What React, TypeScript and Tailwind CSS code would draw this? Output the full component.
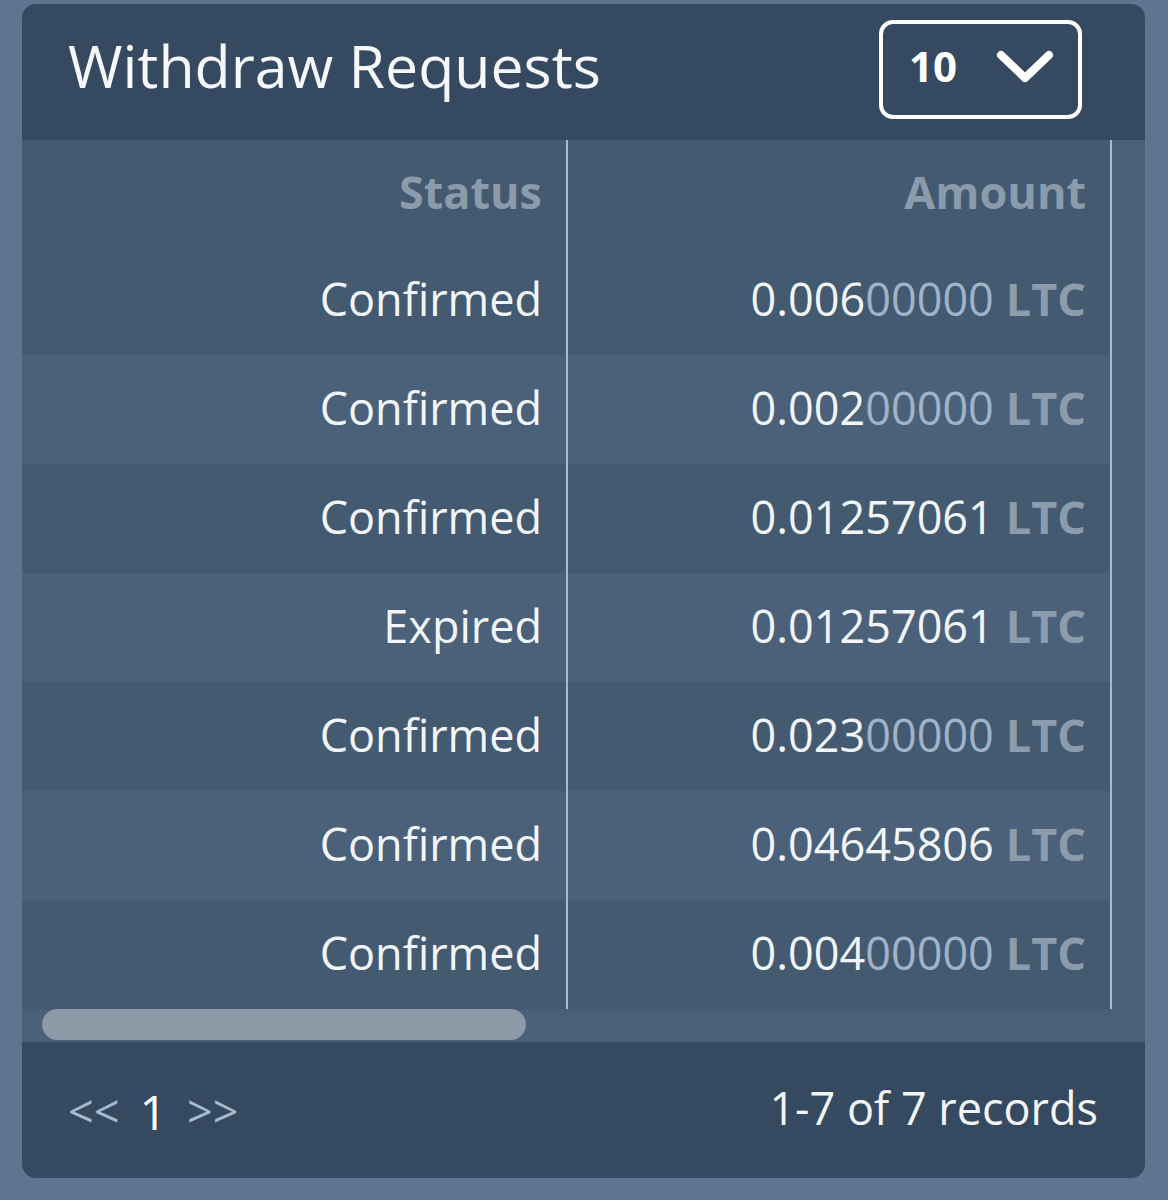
const rows = [
  { status: "Confirmed", amount: "0.00600000" },
  { status: "Confirmed", amount: "0.00200000" },
  { status: "Confirmed", amount: "0.01257061" },
  { status: "Expired", amount: "0.01257061" },
  { status: "Confirmed", amount: "0.02300000" },
  { status: "Confirmed", amount: "0.04645806" },
  { status: "Confirmed", amount: "0.00400000" },
];

function Amount({ value }: { value: string }) {
  const m = value.match(/^(.*?[1-9])(0*)$/);
  const head = m ? m[1] : value;
  const tail = m ? m[2] : "";
  return (
    <span>
      <span className="text-[#f2f5f7]">{head}</span>
      <span className="text-[#9fb3ca]">{tail}</span>
      <span className="ml-[12px] font-bold text-[#8c9cad]">LTC</span>
    </span>
  );
}

export default function App() {
  return (
    <div
      className="min-h-screen bg-[#5e7592] pl-[22px] pt-[4px]"
      style={{ fontFamily: '"Open Sans", "Noto Sans", sans-serif' }}
    >
      <div className="w-[1123px] overflow-hidden rounded-[14px]">
        <div className="flex h-[136px] items-center justify-between bg-[#354a60] pl-[46px] pr-[63px]">
          <h1 className="mb-[14px] text-[59px] leading-none text-[#f5f7f8]">Withdraw Requests</h1>
          <div className="mt-[-6px] flex h-[99px] w-[203px] items-center justify-between rounded-[14px] border-[4px] border-white pl-[26px] pr-[24px]">
            <span className="mb-[6px] text-[42px] font-bold leading-none text-white">10</span>
            <svg width="58" height="36" viewBox="0 0 58 36" fill="none" className="mb-[4px]">
              <path d="M5 6 L29 29 L53 6" stroke="white" strokeWidth="8" strokeLinecap="round" strokeLinejoin="round" />
            </svg>
          </div>
        </div>

        <div className="bg-[#4a6079]">
          <div className="w-[1090px] text-[45px] leading-none">
            <div className="flex h-[106px] bg-[#435a71] font-bold text-[#8a9bac]">
              <div className="flex w-[546px] items-center justify-end border-r-2 border-[#a9b9c9] pb-[4px] pr-[24px]">Status</div>
              <div className="flex w-[544px] items-center justify-end border-r-2 border-[#a9b9c9] pb-[4px] pr-[24px]">Amount</div>
            </div>
            {rows.map((r, i) => (
              <div key={i} className={`flex h-[109px] ${i % 2 === 0 ? "bg-[#435a71]" : "bg-[#4a6179]"}`}>
                <div className="flex w-[546px] items-center justify-end border-r-2 border-[#a9b9c9] pb-[4px] pr-[24px] text-[#f2f5f7]">
                  {r.status}
                </div>
                <div className="flex w-[544px] items-center justify-end border-r-2 border-[#a9b9c9] pb-[4px] pr-[24px]">
                  <Amount value={r.amount} />
                </div>
              </div>
            ))}
          </div>
          <div className="flex h-[33px] items-start pl-[20px]">
            <div className="h-[31px] w-[484px] rounded-full bg-[#8c9aa7]" />
          </div>
        </div>

        <div className="flex h-[136px] items-center justify-between bg-[#354a60] pl-[46px] pr-[47px] text-[45px] leading-none">
          <div className="flex items-center gap-[20px]">
            <span className="text-[#a7bbd0]">&lt;&lt;</span>
            <span className="mt-[4px] text-[48px] text-white">1</span>
            <span className="text-[#a7bbd0]">&gt;&gt;</span>
          </div>
          <span className="mb-[6px] text-[#f2f5f7]">1-7 of 7 records</span>
        </div>
      </div>
    </div>
  );
}
